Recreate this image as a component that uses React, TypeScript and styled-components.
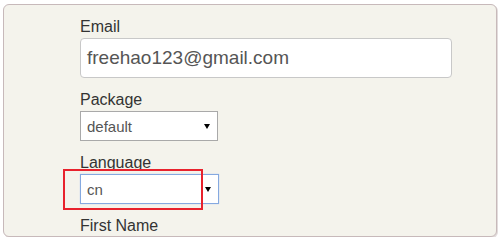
import React from "react";
import styled, { createGlobalStyle } from "styled-components";

const GlobalStyle = createGlobalStyle`
  html, body { margin: 0; padding: 0; background: #ffffff; }
  body { font-family: "Liberation Sans", Arial, sans-serif; }
`;

const Panel = styled.div`
  box-sizing: border-box;
  margin: 4px 3px 0 3px;
  width: 494px;
  background: #f4f3ec;
  border: 1px solid #c7b9ba;
  border-radius: 6px;
  box-shadow: 1px 1px 0 #e2dcdc;
  padding: 11px 45px 0 76px;
  display: flex;
  flex-direction: column;
  gap: 11px;
`;

const Field = styled.div`
  position: relative;
  display: flex;
  flex-direction: column;
  gap: 1px;
`;

const Label = styled.label`
  font-size: 16px;
  line-height: 21px;
  height: 21px;
  color: #333333;
`;

const TextInput = styled.div`
  box-sizing: border-box;
  height: 40px;
  width: 372px;
  border: 1px solid #c8c8c8;
  border-radius: 4px;
  background: #ffffff;
  padding: 0 6px;
  display: flex;
  align-items: center;
  font-size: 19px;
  color: #555555;
`;

const Select = styled.div<{ $w: number; $focused?: boolean }>`
  box-sizing: border-box;
  height: 30px;
  width: ${(p) => p.$w}px;
  border: 1px solid ${(p) => (p.$focused ? "#85a9e0" : "#a9a9a9")};
  box-shadow: ${(p) => (p.$focused ? "0 0 1px #a9c4ef" : "none")};
  background: #ffffff;
  padding: 0 7px 0 6px;
  display: flex;
  align-items: center;
  justify-content: space-between;
  font-size: 15px;
  color: #555555;
`;

const Arrow = styled.svg`
  width: 6px;
  height: 5px;
  display: block;
`;

const Highlight = styled.div`
  position: absolute;
  left: -17px;
  top: 17px;
  width: 140px;
  height: 41px;
  box-sizing: border-box;
  border: 2px solid #e8222d;
  pointer-events: none;
`;

const Caret = () => (
  <Arrow viewBox="0 0 6 5">
    <polygon points="0,0 6,0 3,5" fill="#000" />
  </Arrow>
);

export default function App() {
  return (
    <>
      <GlobalStyle />
      <Panel>
        <Field>
          <Label>Email</Label>
          <TextInput>freehao123@gmail.com</TextInput>
        </Field>
        <Field>
          <Label>Package</Label>
          <Select $w={138}>
            <span>default</span>
            <Caret />
          </Select>
        </Field>
        <Field>
          <Label>Language</Label>
          <Select $w={139} $focused>
            <span>cn</span>
            <Caret />
          </Select>
          <Highlight />
        </Field>
        <Field>
          <Label>First Name</Label>
        </Field>
      </Panel>
    </>
  );
}
